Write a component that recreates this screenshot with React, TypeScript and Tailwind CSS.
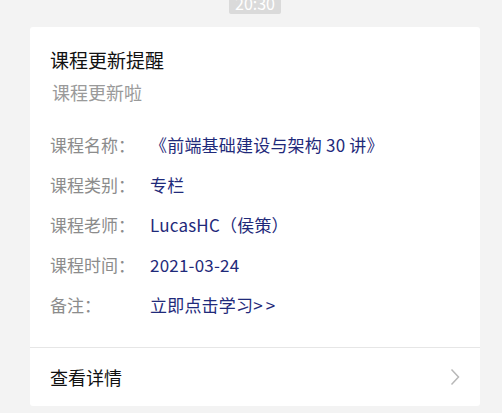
const rows: [string, React.ReactNode][] = [
  ["课程名称：", "《前端基础建设与架构 30 讲》"],
  ["课程类别：", "专栏"],
  ["课程老师：", "LucasHC（侯策）"],
  ["课程时间：", "2021-03-24"],
  [
    "备注：",
    <>
      立即点击学习<span className="tracking-[3px]">&gt;&gt;</span>
    </>,
  ],
];

export default function App() {
  return (
    <div
      className="w-[502px] h-[413px] bg-[#f3f3f3] overflow-hidden"
      style={{ fontFamily: '"Noto Sans CJK SC", "Liberation Sans", sans-serif' }}
    >
      <div className="flex justify-center pl-[8px]">
        <div className="mt-[-6px] w-[52px] h-[20px] rounded-[2px] bg-[#dadada] text-white text-[16px] leading-[18px] text-center">
          20:30
        </div>
      </div>
      <div className="ml-[30px] mt-[13px] w-[450px] h-[379px] bg-white rounded-[3px] flex flex-col">
        <div className="px-[20px] pt-[21px] pb-[22px]">
          <div className="text-[19px] leading-[24px] text-[#111]">课程更新提醒</div>
          <div className="mt-[8px] pl-[2px] text-[18px] leading-[24px] text-[#9a9a9a]">课程更新啦</div>
          <div className="mt-[21px] flex flex-col">
            {rows.map(([label, value]) => (
              <div key={label} className="h-[40px] flex items-center text-[17px]">
                <span className="w-[100px] text-[#8c8c8c]">{label}</span>
                <span className="text-[#1f2a7a] tracking-[0.2px]">{value}</span>
              </div>
            ))}
          </div>
        </div>
        <div className="h-px bg-[#e6e6e6]" />
        <div className="flex-1 flex items-center justify-between pl-[20px] pr-[20px]">
          <span className="text-[18px] text-[#111]">查看详情</span>
          <svg width="10" height="18" viewBox="0 0 10 18" fill="none">
            <polyline points="1.5,1.5 8.5,9 1.5,16.5" stroke="#b8b8b8" strokeWidth="1.5" />
          </svg>
        </div>
      </div>
    </div>
  );
}
